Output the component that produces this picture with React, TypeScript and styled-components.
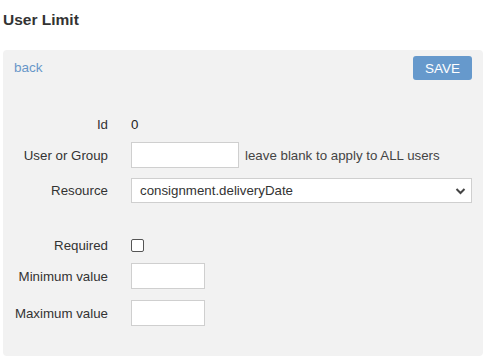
import React from "react";
import styled, { createGlobalStyle } from "styled-components";

const Global = createGlobalStyle`
  html, body { margin: 0; padding: 0; background: #fff; }
  body { font-family: "Liberation Sans", Arial, sans-serif; color: #333; }
  * { box-sizing: border-box; }
`;

const Page = styled.div`
  padding: 0 9px 0 3px;
  width: 492px;
`;

const Title = styled.h1`
  margin: 0;
  padding-top: 11px;
  height: 50px;
  font-size: 15.5px;
  font-weight: bold;
  color: #333;
  font-family: "Liberation Sans", Arial, sans-serif;
`;

const Panel = styled.div`
  background: #f2f2f2;
  border-radius: 4px;
  padding: 6px 11px 30px 11px;
  width: 480px;
`;

const TopBar = styled.div`
  display: flex;
  justify-content: space-between;
  align-items: center;
  height: 24px;
`;

const BackLink = styled.a`
  color: #6897c9;
  font-size: 13.5px;
  text-decoration: none;
  cursor: pointer;
  margin-top: -1px;
`;

const SaveButton = styled.button`
  background: #6699cc;
  color: #fff;
  border: none;
  border-radius: 3px;
  font-family: "Liberation Sans", Arial, sans-serif;
  font-size: 13.5px;
  height: 24px;
  width: 59px;
  padding: 0;
`;

const Row = styled.div<{ $mt: number; $h: number }>`
  display: grid;
  grid-template-columns: 94px 1fr;
  column-gap: 23px;
  align-items: center;
  margin-top: ${(p) => p.$mt}px;
  height: ${(p) => p.$h}px;
`;

const Label = styled.label`
  text-align: right;
  font-size: 13.3px;
  color: #333;
  white-space: nowrap;
`;

const Value = styled.span`
  font-size: 13.3px;
  color: #222;
`;

const Control = styled.div`
  display: flex;
  align-items: center;
  gap: 6px;
  height: 100%;
`;

const TextInput = styled.input<{ $w: number }>`
  width: ${(p) => p.$w}px;
  height: 100%;
  background: #fff;
  border: 1px solid #cfcfcf;
  border-radius: 0;
  padding: 0 6px;
  font-size: 13.3px;
  font-family: "Liberation Sans", Arial, sans-serif;
`;

const Hint = styled.span`
  font-size: 13.3px;
  color: #444;
`;

const SelectBox = styled.div`
  position: relative;
  width: 341px;
  height: 100%;
  background: #fff;
  border: 1px solid #cfcfcf;
  display: flex;
  align-items: center;
  padding: 0 8px;
  font-size: 13.3px;
  color: #333;
`;

const Chevron = styled.svg`
  position: absolute;
  right: 5px;
  top: 50%;
  margin-top: -4px;
`;

const CheckBox = styled.span`
  width: 13px;
  height: 13px;
  border: 1px solid #555;
  border-radius: 2px;
  background: #fff;
  display: inline-block;
`;

export default function App() {
  return (
    <Page>
      <Global />
      <Title>User Limit</Title>
      <Panel>
        <TopBar>
          <BackLink>back</BackLink>
          <SaveButton>SAVE</SaveButton>
        </TopBar>
        <Row $mt={33} $h={22}>
          <Label>Id</Label>
          <Value>0</Value>
        </Row>
        <Row $mt={7} $h={26}>
          <Label>User or Group</Label>
          <Control>
            <TextInput $w={108} />
            <Hint>leave blank to apply to ALL users</Hint>
          </Control>
        </Row>
        <Row $mt={10} $h={25}>
          <Label>Resource</Label>
          <Control>
            <SelectBox>
              consignment.deliveryDate
              <Chevron width="11" height="8" viewBox="0 0 11 8">
                <path d="M1.5 2 L5.5 6 L9.5 2" fill="none" stroke="#444" strokeWidth="2" />
              </Chevron>
            </SelectBox>
          </Control>
        </Row>
        <Row $mt={35} $h={14}>
          <Label>Required</Label>
          <Control>
            <CheckBox />
          </Control>
        </Row>
        <Row $mt={11} $h={26}>
          <Label>Minimum value</Label>
          <Control>
            <TextInput $w={74} />
          </Control>
        </Row>
        <Row $mt={11} $h={26}>
          <Label>Maximum value</Label>
          <Control>
            <TextInput $w={74} />
          </Control>
        </Row>
      </Panel>
    </Page>
  );
}
